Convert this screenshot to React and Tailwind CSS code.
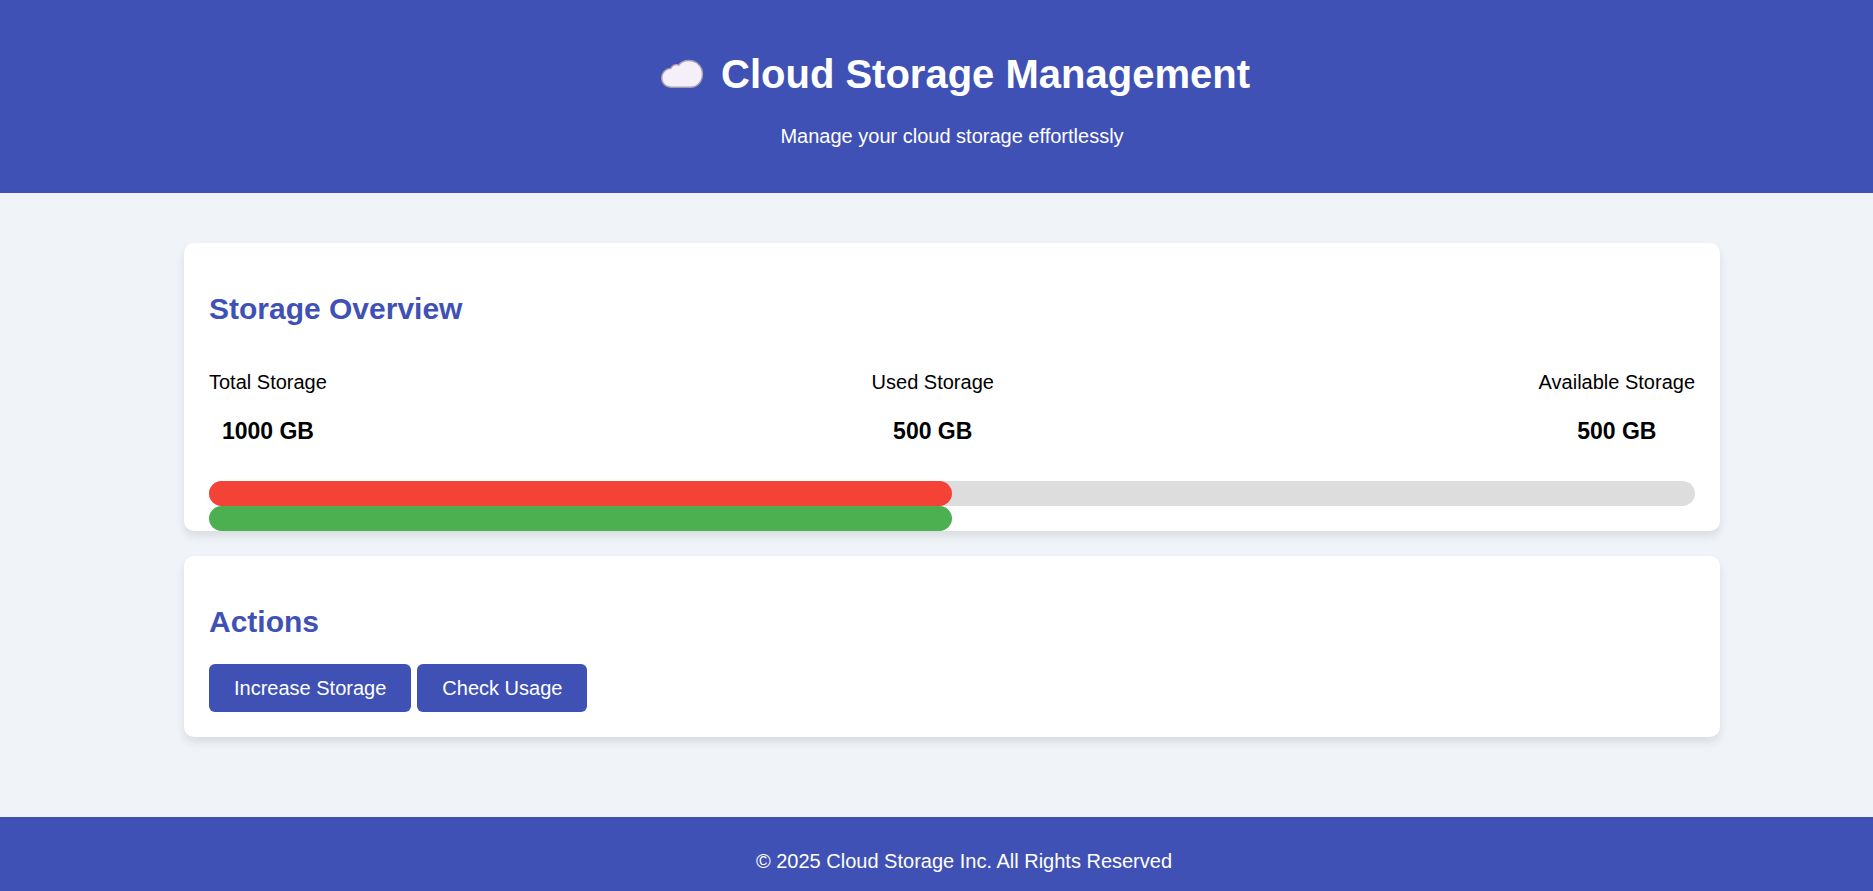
const TOTAL = 1000;
const USED = 500;
const AVAILABLE = TOTAL - USED;

const stats = [
  { label: "Total Storage", value: TOTAL },
  { label: "Used Storage", value: USED },
  { label: "Available Storage", value: AVAILABLE },
];

function CloudIcon() {
  return (
    <svg className="h-10 w-14 shrink-0" viewBox="0 0 56 40" aria-hidden="true">
      <path
        d="M17 33.2 C11.3 33.2 7.7 29.2 7.7 24 C7.7 18.6 11.6 14.6 16.8 14.4 C18.3 11.3 21.5 10.1 24.8 11 C27 8 30.6 6.5 34.8 6.5 C42.8 6.5 48.5 12.4 48.5 20 C48.5 27.6 43.4 33.2 36.5 33.2 Z"
        fill="#f4eff9"
        stroke="#a69fae"
        strokeWidth="1.4"
      />
    </svg>
  );
}

function Card({ title, className, children }) {
  return (
    <section
      className={`rounded-[10px] bg-white px-[25px] pt-[49px] shadow-[0_5px_10px_rgba(0,0,0,0.1)] ${className}`}
    >
      <h2 className="text-[30px] leading-[34px] font-bold text-[#3f51b5]">{title}</h2>
      {children}
    </section>
  );
}

function ActionButton({ children }) {
  return (
    <button
      type="button"
      className="h-12 cursor-pointer rounded-md bg-[#3f51b5] px-[25px] text-xl leading-[23px] text-white"
    >
      {children}
    </button>
  );
}

export default function App() {
  const usedWidth = `${(USED / TOTAL) * 100}%`;
  const availableWidth = `${(AVAILABLE / TOTAL) * 100}%`;

  return (
    <div className="min-h-screen bg-[#f0f4f8] font-['Liberation_Sans',Arial,sans-serif] text-xl leading-[23px] text-black">
      <header className="bg-[#3f51b5] pt-[51px] pb-[45px] pl-[31px] text-center text-white">
        <h1 className="mb-7 flex items-center justify-center gap-[11px] text-[40px] leading-[46px] font-bold">
          <CloudIcon />
          Cloud Storage Management
        </h1>
        <p>Manage your cloud storage effortlessly</p>
      </header>

      <main className="pt-[50px] pb-20 pl-[31px]">
        <div className="mx-auto flex max-w-[1536px] flex-col gap-[25px]">
          <Card title="Storage Overview" className="">
            <div className="mt-[45px] flex justify-between text-center">
              {stats.map((stat) => (
                <div key={stat.label}>
                  <p>{stat.label}</p>
                  <h3 className="mt-6 text-[23px] leading-[26px] font-bold">{stat.value} GB</h3>
                </div>
              ))}
            </div>
            <div className="mt-[37px]">
              <div className="h-[25px] rounded-full bg-[#dddddd]">
                <div className="h-full rounded-full bg-[#f44336]" style={{ width: usedWidth }} />
              </div>
              <div className="h-[25px] rounded-full bg-[#4caf50]" style={{ width: availableWidth }} />
            </div>
          </Card>

          <Card title="Actions" className="pb-[25px]">
            <div className="mt-[25px] flex gap-[6px]">
              <ActionButton>Increase Storage</ActionButton>
              <ActionButton>Check Usage</ActionButton>
            </div>
          </Card>
        </div>
      </main>

      <footer className="bg-[#3f51b5] pt-[33px] pb-[18px] pl-[55px] text-center text-white">
        <p>© 2025 Cloud Storage Inc. All Rights Reserved</p>
      </footer>
    </div>
  );
}
